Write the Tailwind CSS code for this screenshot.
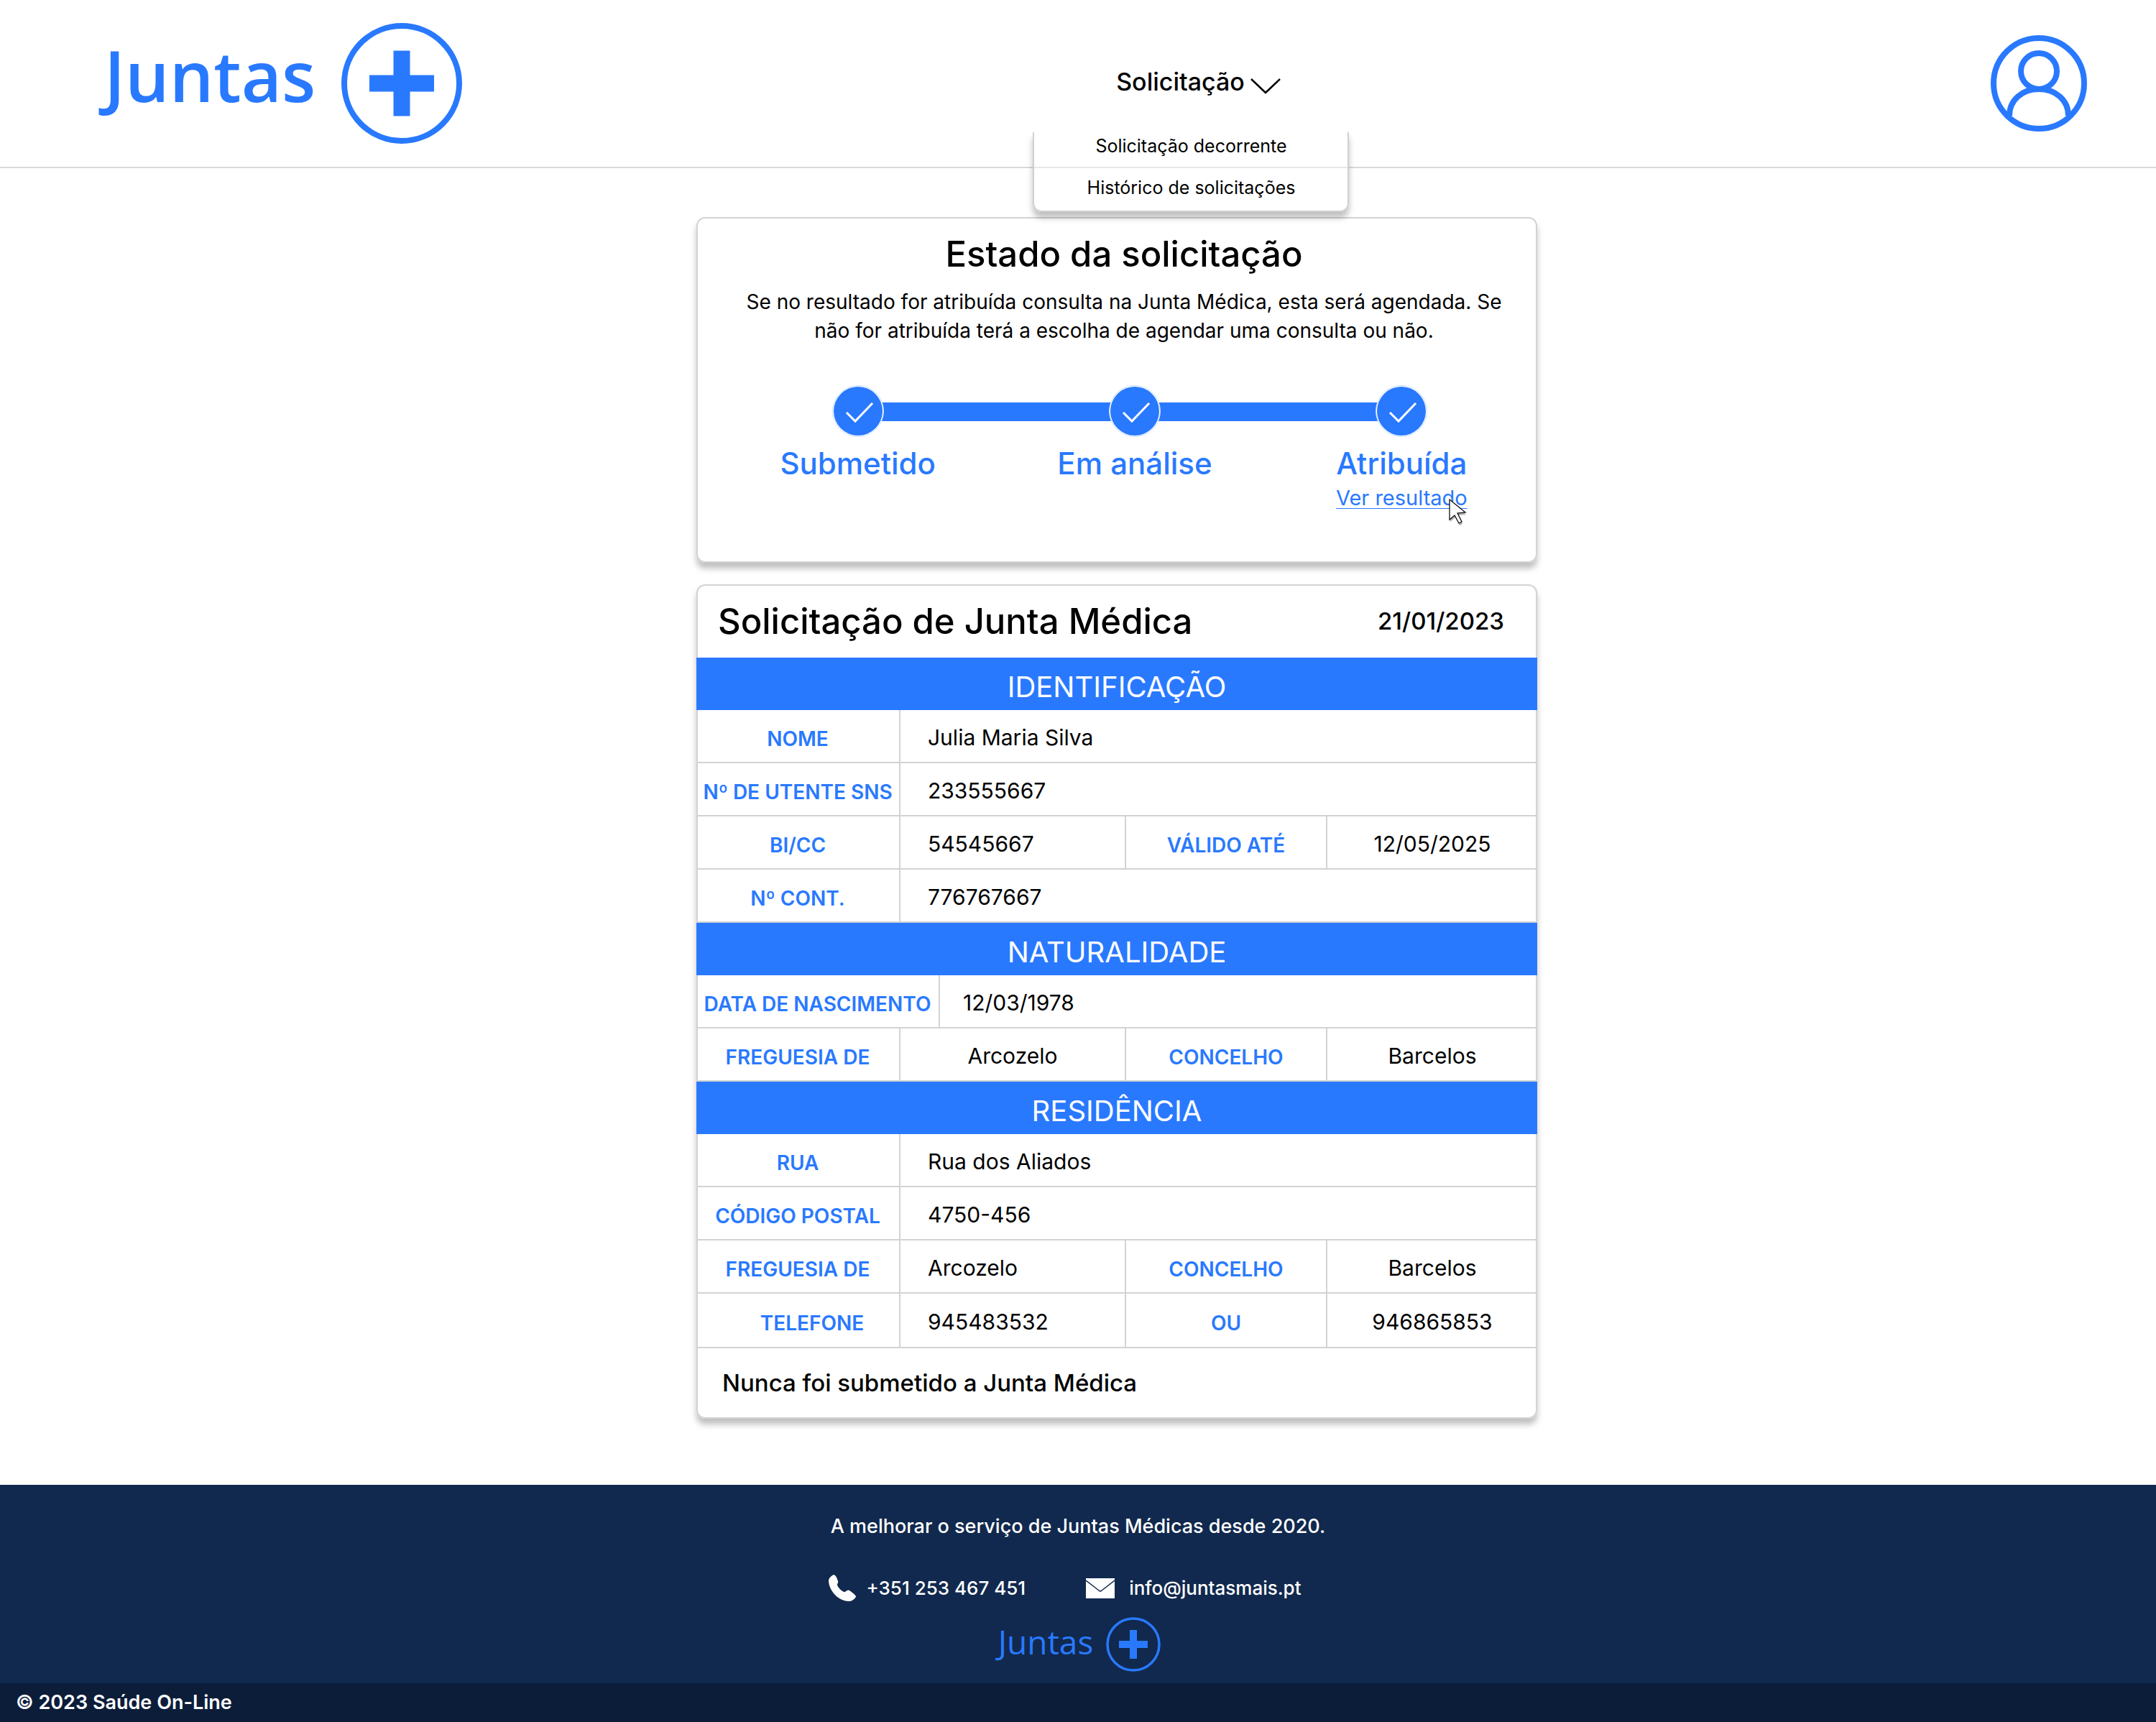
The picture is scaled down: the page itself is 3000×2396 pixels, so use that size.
<!DOCTYPE html>
<html lang="pt">
<head>
<meta charset="utf-8">
<meta name="viewport" content="width=device-width, initial-scale=1">
<title>Juntas+ | Estado da solicitação</title>
<script src="https://cdn.jsdelivr.net/npm/@tailwindcss/browser@4"></script>
</head>
<body class="flex min-h-screen flex-col bg-white font-['Inter',sans-serif] text-black">

<header class="grid h-[234px] grid-cols-[47%_440px_1fr] items-center border-b-2 border-[#d9d9d9] pr-24 pl-[137px]">
  <a href="#" aria-label="Juntas+" class="flex items-center gap-9 pl-2 text-[#2979ff]">
    <span class="pb-6 font-['Open_Sans',sans-serif] text-[97px] leading-[120px] font-semibold">Juntas</span>
    <svg class="size-[168px]" viewBox="0 0 168 168" fill="none" stroke="currentColor">
      <circle cx="84" cy="84" r="80" stroke-width="8"/>
      <path d="M84 38.500V129.500M39 84H129" stroke-width="23"/>
    </svg>
  </a>
  <nav class="relative flex justify-center pl-5">
    <button type="button" aria-expanded="true" class="flex items-center gap-2 pb-1 text-[34px] leading-[60px] font-medium">
      Solicitação
      <svg class="mt-3 h-[22px] w-[42px]" viewBox="0 0 42 22" fill="none" stroke="currentColor" stroke-width="2.500"><path d="M1 1L21 20L41 1"/></svg>
    </button>
    <ul class="absolute inset-x-0 top-[100px] z-10 h-[111px] rounded-b-xl border-2 border-t-0 border-[#d0d0d0] bg-white/40 text-center text-[25px] leading-[58px] shadow-[0_8px_8px_rgba(0,0,0,0.25)]">
      <li class="-mt-2.5"><a href="#">Solicitação decorrente</a></li>
      <li><a href="#">Histórico de solicitações</a></li>
    </ul>
  </nav>
  <a href="#" aria-label="Perfil" class="justify-self-end text-[#2979ff]">
    <svg class="size-[134px]" viewBox="0 0 134 134" fill="none" stroke="currentColor" stroke-width="8">
      <circle cx="67" cy="67" r="63"/>
      <circle cx="67" cy="50" r="25"/>
      <path d="M26 112C26 90 44 75 67 75S108 90 108 112"/>
    </svg>
  </a>
</header>

<main class="flex w-full grow flex-col items-center gap-[30px] pt-[68px] pb-[92px] pl-[108px]">

  <section class="h-[481px] w-full max-w-[1170px] rounded-xl border-2 border-[#d3d3d3] pt-5 shadow-[0_8px_8px_rgba(0,0,0,0.25)]">
    <h1 class="pl-5 text-center text-[49px] leading-[60px] font-medium">Estado da solicitação</h1>
    <p class="mt-4 pr-9 pl-14 text-center text-[28px] leading-10">Se no resultado for atribuída consulta na Junta Médica, esta será agendada. Se não for atribuída terá a escolha de agendar uma consulta ou não.</p>
    <ol class="mt-14 grid grid-cols-[386fr_386fr_358fr] pr-2 pl-[30px] text-center text-[42px] leading-[50px] font-medium text-[#2979ff]">
      <li class="relative flex flex-col items-center">
        <span class="absolute top-6 left-1/2 h-[26px] w-full bg-[#2979ff]"></span>
        <svg class="relative size-[72px]" viewBox="0 0 72 72"><circle cx="36" cy="36" r="35.500" fill="#fff" stroke="#c5dcff"/><circle cx="36" cy="36" r="34" fill="#2979ff"/><path d="M20 38L32 50L56 25" fill="none" stroke="#fff" stroke-width="3"/></svg>
        <span class="mt-3">Submetido</span>
      </li>
      <li class="relative flex flex-col items-center">
        <span class="absolute top-6 left-1/2 h-[26px] w-full bg-[#2979ff]"></span>
        <svg class="relative size-[72px]" viewBox="0 0 72 72"><circle cx="36" cy="36" r="35.500" fill="#fff" stroke="#c5dcff"/><circle cx="36" cy="36" r="34" fill="#2979ff"/><path d="M20 38L32 50L56 25" fill="none" stroke="#fff" stroke-width="3"/></svg>
        <span class="mt-3">Em análise</span>
      </li>
      <li class="relative flex flex-col items-center">
        <svg class="relative size-[72px]" viewBox="0 0 72 72"><circle cx="36" cy="36" r="35.500" fill="#fff" stroke="#c5dcff"/><circle cx="36" cy="36" r="34" fill="#2979ff"/><path d="M20 38L32 50L56 25" fill="none" stroke="#fff" stroke-width="3"/></svg>
        <span class="mt-3">Atribuída</span>
        <a href="#" class="relative text-[29px] leading-[46px] font-normal underline decoration-1 underline-offset-4">Ver resultado
          <svg class="absolute top-6 right-0.5 h-9 w-6 overflow-visible" viewBox="0 0 24 36"><path d="M1 1V29L8 23L14 34L18 32L12 20L23 19Z" transform="translate(1 3)" fill="#000" opacity=".3"/><path d="M1 1V29L8 23L14 34L18 32L12 20L23 19Z" fill="#fff" stroke="#111" stroke-width="1.300"/></svg>
        </a>
      </li>
    </ol>
  </section>

  <section class="w-full max-w-[1170px] rounded-xl border-2 border-[#d3d3d3] shadow-[0_8px_8px_rgba(0,0,0,0.25)]">
    <div class="flex h-[100px] items-center justify-between pr-11 pl-7 font-medium">
      <h2 class="text-[49px] leading-[64px]">Solicitação de Junta Médica</h2>
      <time datetime="2023-01-21" class="text-[33px]">21/01/2023</time>
    </div>
    <table class="-mx-0.5 w-[calc(100%+4px)] table-fixed border-separate border-spacing-0 text-[30px] leading-10 [&_td]:border-b-2 [&_td]:border-[#d3d3d3] [&_td]:pt-1 [&_td]:pl-[38px] [&_td]:text-left [&_tbody_tr]:h-[74px] [&_thead_tr]:h-[73px] [&_tbody_th]:border-r-2 [&_tbody_th]:border-b-2 [&_tbody_th]:border-[#d3d3d3] [&_tbody_th]:pt-2 [&_tbody_th]:text-[28px] [&_tbody_th]:font-semibold [&_tbody_th]:whitespace-nowrap [&_tbody_th]:text-[#2979ff] [&_thead_th]:bg-[#2979ff] [&_thead_th]:pt-2 [&_thead_th]:text-[40px] [&_thead_th]:font-normal [&_thead_th]:text-white">
      <colgroup><col class="w-[284px]"><col class="w-[55px]"><col><col class="w-[282px]"><col class="w-[292px]"></colgroup>
      <thead><tr><th colspan="5">IDENTIFICAÇÃO</th></tr></thead>
      <tbody>
        <tr><th scope="row">NOME</th><td colspan="4">Julia Maria Silva</td></tr>
        <tr><th scope="row">Nº DE UTENTE SNS</th><td colspan="4">233555667</td></tr>
        <tr><th scope="row">BI/CC</th><td colspan="2">54545667</td><th scope="row" class="border-l-2">VÁLIDO ATÉ</th><td class="pl-0! text-center!">12/05/2025</td></tr>
        <tr><th scope="row">Nº CONT.</th><td colspan="4">776767667</td></tr>
      </tbody>
      <thead><tr><th colspan="5">NATURALIDADE</th></tr></thead>
      <tbody>
        <tr><th scope="row" colspan="2">DATA DE NASCIMENTO</th><td colspan="3" class="pl-8!">12/03/1978</td></tr>
        <tr><th scope="row">FREGUESIA DE</th><td colspan="2" class="pl-0! text-center!">Arcozelo</td><th scope="row" class="border-l-2">CONCELHO</th><td class="pl-0! text-center!">Barcelos</td></tr>
      </tbody>
      <thead><tr><th colspan="5">RESIDÊNCIA</th></tr></thead>
      <tbody>
        <tr><th scope="row">RUA</th><td colspan="4">Rua dos Aliados</td></tr>
        <tr><th scope="row">CÓDIGO POSTAL</th><td colspan="4">4750-456</td></tr>
        <tr><th scope="row">FREGUESIA DE</th><td colspan="2">Arcozelo</td><th scope="row" class="border-l-2">CONCELHO</th><td class="pl-0! text-center!">Barcelos</td></tr>
        <tr class="h-[76px]!"><th scope="row" class="pl-10">TELEFONE</th><td colspan="2">945483532</td><th scope="row" class="border-l-2">OU</th><td class="pl-0! text-center!">946865853</td></tr>
      </tbody>
    </table>
    <p class="pl-[34px] text-[33px] leading-[96px] font-medium">Nunca foi submetido a Junta Médica</p>
  </section>
</main>

<footer class="bg-[#11294e] text-white">
  <div class="flex h-[276px] flex-col items-center pt-9">
    <p class="text-[27px] leading-[44px] font-medium">A melhorar o serviço de Juntas Médicas desde 2020.</p>
    <address class="mt-[42px] flex items-center pr-9 text-[26px] leading-[44px] font-medium not-italic">
      <svg class="mr-3.5 size-[38px]" viewBox="0 0 38 38" fill="currentColor"><path d="M7 0C3 2 0 5 0 9C1 23 14 37 28 37C32 37 35 35 38 31C38 29 36 27 29 22C26 20 24 24 22 24C19 24 12 17 12 14C12 12 14 11 13 9C11 3 10 1 7 0Z"/></svg>
      <a href="tel:+351253467451" class="mr-[84px]">+351 253 467 451</a>
      <svg class="mr-5 h-7 w-10" viewBox="0 0 40 28"><path d="M0 0H40V28H0Z" fill="#fff"/><path d="M0 3L18 17Q20 19 22 17L40 3" fill="none" stroke="#11294e" stroke-width="1.500"/></svg>
      <a href="mailto:info@juntasmais.pt">info@juntasmais.pt</a>
    </address>
    <a href="#" aria-label="Juntas+" class="mt-[18px] flex items-center gap-[18px] pl-1 text-[#2979ff]">
      <span class="pb-2 font-['Open_Sans',sans-serif] text-[46px] leading-[60px]">Juntas</span>
      <svg class="size-[76px]" viewBox="0 0 76 76" fill="none" stroke="currentColor"><circle cx="38" cy="38" r="36" stroke-width="3.500"/><path d="M38 18V58M18 38H58" stroke-width="10"/></svg>
    </a>
  </div>
  <p class="bg-[#0c1d3a] pl-[22px] text-[27px] leading-[54px] font-semibold">© 2023 Saúde On-Line</p>
</footer>
</body>
</html>
